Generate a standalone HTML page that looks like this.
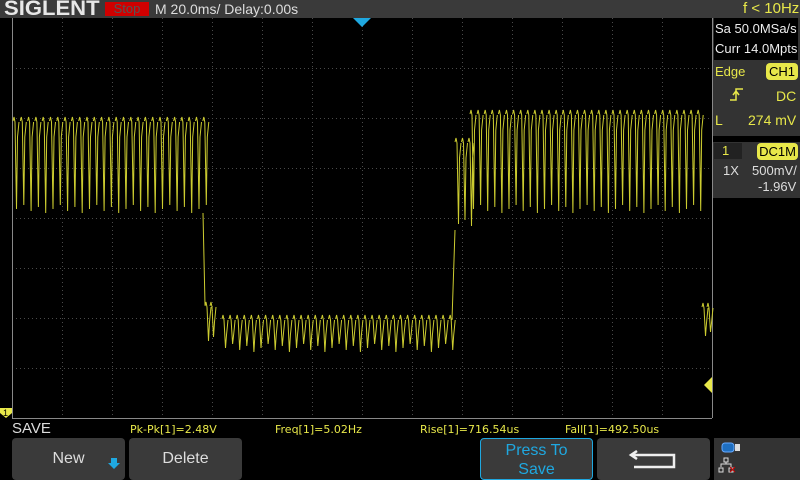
<!DOCTYPE html>
<html><head><meta charset="utf-8"><style>
body{margin:0;width:800px;height:480px;background:#000;overflow:hidden;position:relative;font-family:"Liberation Sans",sans-serif}
.a{position:absolute;white-space:nowrap}
.y{color:#e8e84a}
.btn{position:absolute;top:438px;height:42px;background:#3a3a3a;border-radius:4px;color:#ddd;font-size:16px;text-align:center}
</style></head><body>
<div class="a" style="left:0;top:0;width:800px;height:18px;background:#3a3a3a"></div>
<div class="a" style="left:4px;top:-3px;font-size:21px;font-weight:bold;color:#e8e8e8;letter-spacing:0px;transform:scaleX(1.05);transform-origin:left">SIGLENT</div>
<div class="a" style="left:105px;top:2px;width:44px;height:14px;background:#d00000;color:#555;font-size:13px;text-align:center;line-height:14px">Stop</div>
<div class="a" style="left:155px;top:1px;font-size:14px;color:#ddd">M 20.0ms/ Delay:0.00s</div>
<div class="a" style="left:712px;top:18px;width:88px;height:180px;background:#333"></div>
<div class="a" style="left:714px;top:18px;width:84px;height:42px;background:#000"></div>
<div class="a y" style="left:743px;top:0px;font-size:15px">f &lt; 10Hz</div>
<div class="a" style="left:715px;top:21px;font-size:13px;color:#eee">Sa 50.0MSa/s</div>
<div class="a" style="left:715px;top:41px;font-size:13px;color:#eee">Curr 14.0Mpts</div>
<div class="a y" style="left:715px;top:64px;font-size:13px">Edge</div>
<div class="a" style="left:766px;top:63px;width:32px;height:17px;background:#e8e84a;border-radius:4px;font-size:13px;color:#000;text-align:center;line-height:17px">CH1</div>
<svg class="a" style="left:728px;top:86px" width="20" height="16"><path d="M2 14H8V3H15M5 9L8 5L11 9" fill="none" stroke="#e8e84a" stroke-width="1.5"/></svg>
<div class="a y" style="left:776px;top:88px;font-size:14px">DC</div>
<div class="a y" style="left:715px;top:112px;font-size:14px">L</div>
<div class="a y" style="left:748px;top:112px;font-size:14px">274 mV</div>
<div class="a" style="left:712px;top:136px;width:88px;height:6px;background:#000"></div>
<div class="a" style="left:714px;top:143px;width:28px;height:16px;background:#222"></div>
<div class="a y" style="left:722px;top:143px;font-size:13px">1</div>
<div class="a" style="left:757px;top:143px;width:41px;height:17px;background:#e8e84a;border-radius:4px;font-size:13px;color:#000;text-align:center;line-height:17px">DC1M</div>
<div class="a" style="left:723px;top:163px;font-size:13px;color:#ddd">1X</div>
<div class="a" style="left:752px;top:163px;font-size:13px;color:#ddd">500mV/</div>
<div class="a" style="left:758px;top:179px;font-size:13px;color:#ddd">-1.96V</div>
<svg class="a" style="left:0;top:0" width="800" height="480">
<g id="g" stroke="#4a4a4a" stroke-width="1" stroke-dasharray="1 3"></g>
<line x1="12.5" y1="18" x2="12.5" y2="418" stroke="#888"/>
<line x1="12" y1="418.5" x2="712" y2="418.5" stroke="#888"/>
<line x1="712.5" y1="18" x2="712.5" y2="418" stroke="#888"/>
<polygon points="353,18 371,18 362,27" fill="#1fa8e0"/>
<polygon points="712,377 712,393 704,385" fill="#e8e84a"/>
<polygon points="0,408 12,408 12,413 6,418 0,413" fill="#e8e84a"/>
<text x="3" y="416" font-size="9" fill="#000" font-family="Liberation Sans">1</text>
<path id="w" fill="none" stroke="#cccc30" stroke-width="1"/>
</svg>
<div class="a" style="left:12px;top:420px;font-size:15px;color:#ddd">SAVE</div>
<div class="a y" style="left:130px;top:423px;font-size:11px;font-family:'DejaVu Sans',sans-serif">Pk-Pk[1]=2.48V</div>
<div class="a y" style="left:275px;top:423px;font-size:11px;font-family:'DejaVu Sans',sans-serif">Freq[1]=5.02Hz</div>
<div class="a y" style="left:420px;top:423px;font-size:11px;font-family:'DejaVu Sans',sans-serif">Rise[1]=716.54us</div>
<div class="a y" style="left:565px;top:423px;font-size:11px;font-family:'DejaVu Sans',sans-serif">Fall[1]=492.50us</div>
<div class="btn" style="left:12px;width:113px;line-height:42px">New</div>
<svg class="a" style="left:108px;top:458px" width="12" height="12"><path d="M3 0h6v5h3l-6 6l-6-6h3z" fill="#1fa8e0"/></svg>
<div class="btn" style="left:129px;width:113px;line-height:42px">Delete</div>
<div class="btn" style="left:480px;width:111px;border:1px solid #1fa8e0;color:#1fa8e0;line-height:19px;padding-top:2px;box-sizing:content-box;height:38px">Press To<br>Save</div>
<div class="btn" style="left:597px;width:113px"></div>
<svg class="a" style="left:597px;top:438px" width="113" height="42"><path d="M40 13 L34 17 L40 21 M34 17 H77 V29 H37" fill="none" stroke="#eee" stroke-width="2.5"/></svg>
<div class="a" style="left:714px;top:438px;width:86px;height:42px;background:#333"></div>
<svg class="a" style="left:714px;top:438px" width="86" height="42"><rect x="8" y="5" width="12" height="9" rx="3" fill="#1f6fc0" stroke="#6af"/><rect x="21" y="6" width="5" height="7" fill="#ddd"/><path d="M10 20h4v4h-4zM7 29v-3h10v3M5 30h4v4h-4zM15 30h4v4h-4zM12 24v2" fill="none" stroke="#ddd"/><path d="M16 29l5 5M21 29l-5 5" stroke="#c00"/></svg>
<script>
var g=document.getElementById('g'),s='';
for(var x=62;x<712;x+=50)s+='<line x1="'+(x+.5)+'" y1="18" x2="'+(x+.5)+'" y2="418"/>';
for(var y=68;y<418;y+=50)s+='<line x1="12" y1="'+(y+.5)+'" x2="712" y2="'+(y+.5)+'"/>';
g.innerHTML=s;
var d='';
function seg(x0,x1,top,bot,p){var i=0;for(var x=x0;x<x1;x+=p){i++;var b=bot-((i*7)%5)*2;d+='M'+x+' '+(top+4)+'L'+(x+1)+' '+top+'L'+(x+2)+' '+(top+5)+'L'+(x+3.5)+' '+b+'L'+(x+4.5)+' '+(top+20)+'L'+(x+6)+' '+(top+5)+' ';}}
seg(13,203,117,213,7.3);
d+='M203 213L205 305 ';
seg(205,215,302,345,5);
seg(222,452,315,352,7.1);
d+='M452 320L455 230 ';
seg(455,470,138,228,6.5);
seg(470,700,110,213,7.1);
seg(702,712,303,340,5);
document.getElementById('w').setAttribute('d',d);
</script>
</body></html>
